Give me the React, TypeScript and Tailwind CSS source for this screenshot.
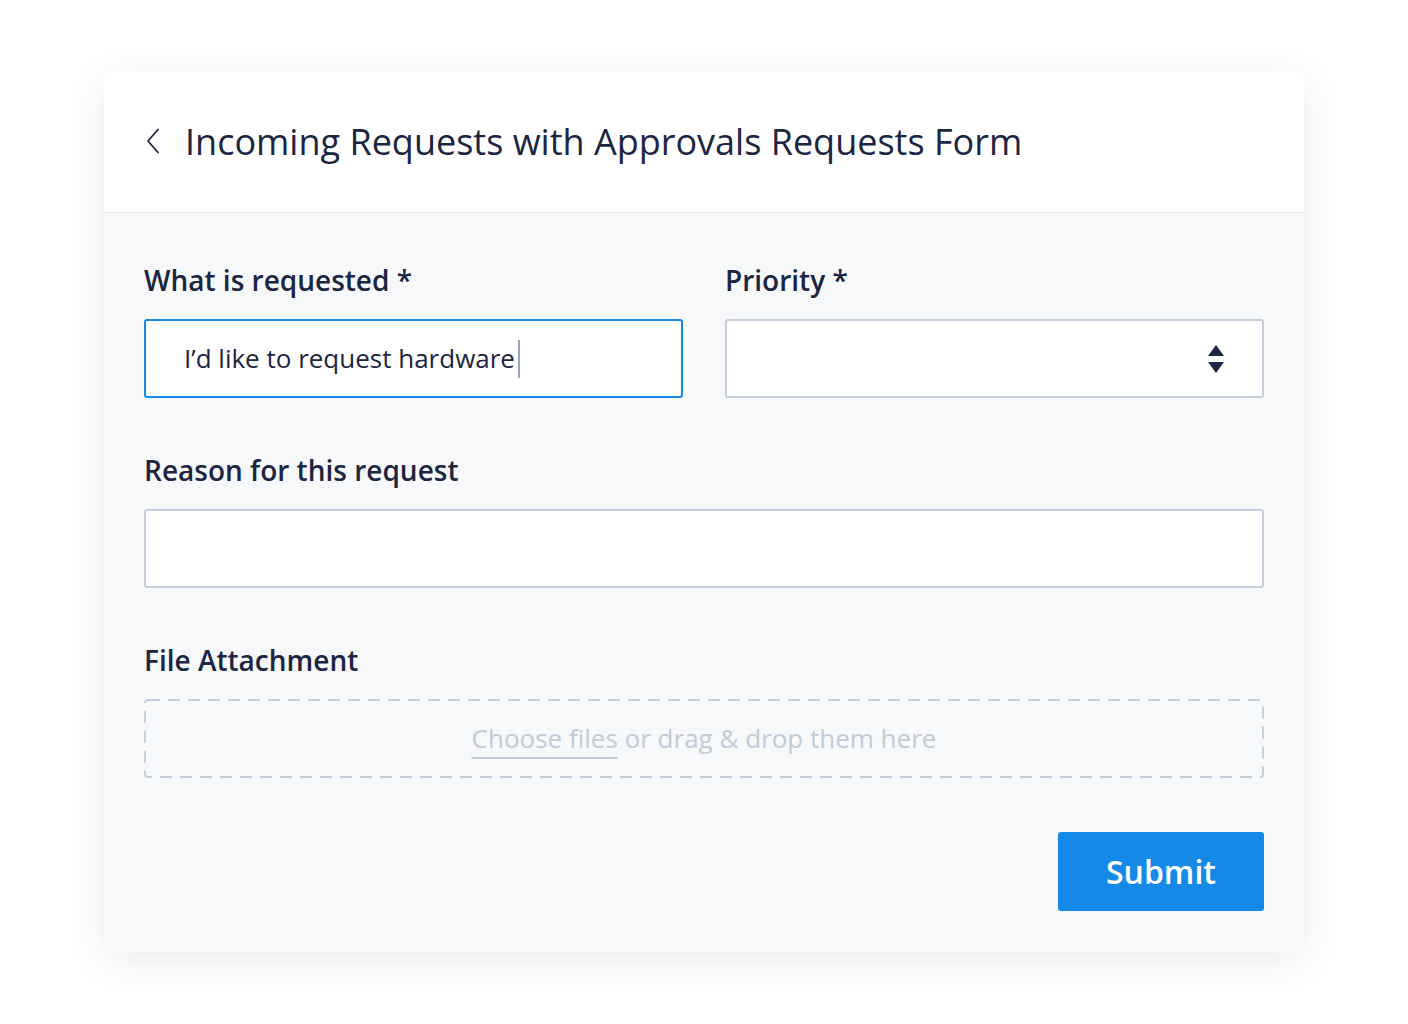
const font = { fontFamily: '"Open Sans", "Noto Sans", sans-serif' };

function Label({ children }: { children: React.ReactNode }) {
  return (
    <div className="text-[28px] font-semibold leading-[38px] text-[#1c2541]">
      {children}
    </div>
  );
}

export default function App() {
  return (
    <div
      className="min-h-[1024px] w-[1408px] bg-white pt-[72px]"
      style={font}
    >
      <div className="mx-auto w-[1200px] overflow-hidden rounded-[4px] bg-[#f7f8fa] shadow-[0_8px_40px_rgba(30,45,70,0.09)]">
        {/* Header */}
        <div className="flex h-[141px] items-center border-b border-[#e4e8ee] bg-white pl-[42px]">
          <svg width="14" height="26" viewBox="0 0 14 26" fill="none" className="mt-[-2px]">
            <path
              d="M12 1.5 L2 13 L12 24.5"
              stroke="#1c2541"
              strokeWidth="1.8"
              strokeLinecap="round"
              strokeLinejoin="round"
            />
          </svg>
          <h1 className="ml-[25px] text-[36px] font-normal leading-none text-[#1c2541]">
            Incoming Requests with Approvals Requests Form
          </h1>
        </div>

        {/* Body */}
        <div className="px-[40px] pb-[41px] pt-[48px]">
          <div className="grid grid-cols-2 gap-[42px]">
            <div className="flex flex-col gap-[20px]">
              <Label>What is requested *</Label>
              <div className="flex h-[79px] items-center rounded-[3px] border-2 border-[#1589e8] bg-white px-[38px]">
                <span className="text-[26px] text-[#1c2541]">
                  I’d like to request hardware
                </span>
                <span className="ml-[3px] h-[38px] w-[2px] bg-[#9aa4bd]" />
              </div>
            </div>
            <div className="flex flex-col gap-[20px]">
              <Label>Priority *</Label>
              <div className="flex h-[79px] items-center justify-end rounded-[3px] border-2 border-[#c7cdda] bg-white pr-[37px]">
                <svg width="18" height="30" viewBox="0 0 18 30" fill="#1c2541">
                  <path d="M9 1 L17 12 L1 12 Z" />
                  <path d="M1 18 L17 18 L9 29 Z" />
                </svg>
              </div>
            </div>
          </div>

          <div className="mt-[53px] flex flex-col gap-[20px]">
            <Label>Reason for this request</Label>
            <div className="h-[79px] rounded-[3px] border-2 border-[#c7cdda] bg-white" />
          </div>

          <div className="mt-[53px] flex flex-col gap-[20px]">
            <Label>File Attachment</Label>
            <div className="relative flex h-[79px] items-center justify-center">
              <svg
                className="absolute inset-0 h-full w-full"
                width="1120"
                height="79"
              >
                <rect
                  x="1"
                  y="1"
                  width="1118"
                  height="77"
                  rx="3"
                  fill="none"
                  stroke="#c7cdda"
                  strokeWidth="2"
                  strokeDasharray="12 8"
                />
              </svg>
              <span className="relative text-[26px] text-[#c3cad8]">
                <span className="underline decoration-[#c3cad8] decoration-2 underline-offset-[9px]">
                  Choose files
                </span>{" "}
                or drag &amp; drop them here
              </span>
            </div>
          </div>

          <div className="mt-[54px] flex justify-end">
            <button className="h-[79px] w-[206px] rounded-[3px] bg-[#1589e8] text-[32px] font-semibold text-white">
              Submit
            </button>
          </div>
        </div>
      </div>
    </div>
  );
}
